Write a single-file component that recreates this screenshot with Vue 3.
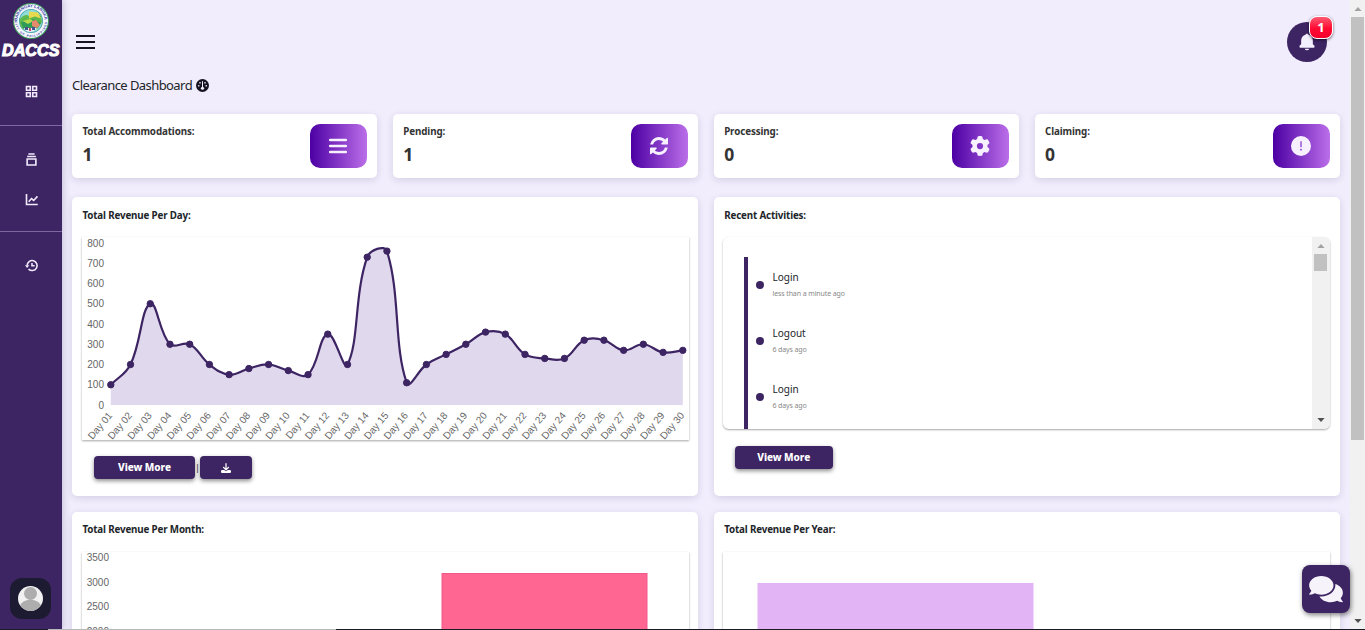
<script setup>
const stats = [
  { label: 'Total Accommodations:', value: 1, icon: 'bars' },
  { label: 'Pending:', value: 1, icon: 'refresh' },
  { label: 'Processing:', value: 0, icon: 'gear' },
  { label: 'Claiming:', value: 0, icon: 'alert' },
]

const activities = [
  { title: 'Login', time: 'less than a minute ago' },
  { title: 'Logout', time: '6 days ago' },
  { title: 'Login', time: '6 days ago' },
]

const revenue = [
  100, 200, 500, 300, 300, 200, 150, 180, 200, 170, 150, 350, 200, 730, 760,
  110, 200, 250, 300, 360, 350, 250, 230, 230, 320, 320, 270, 300, 260, 270,
]

// Plot area inside the daily chart's drawing surface
const plot = { left: 28.8, right: 600.8, top: 6, bottom: 168 }
const yOf = (v) => plot.bottom - (v / 800) * (plot.bottom - plot.top)
const points = revenue.map((v, i) => ({
  x: plot.left + (i * (plot.right - plot.left)) / (revenue.length - 1),
  y: yOf(v),
  label: 'Day ' + String(i + 1).padStart(2, '0'),
}))
const yTicks = [800, 700, 600, 500, 400, 300, 200, 100, 0]

// Smooth curve: each point's handles follow the chord between its neighbours
const tension = 0.4
const clampY = (y) => Math.min(plot.bottom, Math.max(plot.top, y))
const handles = points.map((p, i) => {
  const a = points[i - 1] || p
  const b = points[i + 1] || p
  const d0 = Math.hypot(p.x - a.x, p.y - a.y)
  const d1 = Math.hypot(b.x - p.x, b.y - p.y)
  const f0 = (tension * d0) / (d0 + d1)
  const f1 = (tension * d1) / (d0 + d1)
  return {
    inX: p.x - f0 * (b.x - a.x),
    inY: clampY(p.y - f0 * (b.y - a.y)),
    outX: p.x + f1 * (b.x - a.x),
    outY: clampY(p.y + f1 * (b.y - a.y)),
  }
})
const line = points.reduce((d, p, i) => {
  if (i === 0) return `M${p.x} ${p.y}`
  const o = handles[i - 1]
  const n = handles[i]
  return `${d}C${o.outX} ${o.outY} ${n.inX} ${n.inY} ${p.x} ${p.y}`
}, '')
const area = `${line}L${plot.right} ${plot.bottom}L${plot.left} ${plot.bottom}Z`
</script>

<template>
  <div class="app">
    <aside class="sidebar">
      <svg class="seal" viewBox="0 0 38 38" width="38" height="38">
        <defs>
          <path id="ring-top" d="M5.2 19a13.8 13.8 0 0 1 27.6 0" />
          <path id="ring-bottom" d="M2.9 19a16.1 16.1 0 0 0 32.2 0" />
        </defs>
        <circle cx="19" cy="19" r="18" fill="#3d9a5c" />
        <circle cx="19" cy="19" r="17" fill="#f4f6ff" />
        <text class="seal-text"><textPath href="#ring-top" textLength="42">BARANGAY LANGKA</textPath></text>
        <text class="seal-text small"><textPath href="#ring-bottom" textLength="49">CITY OF PHILIPPINES</textPath></text>
        <circle cx="19" cy="19" r="12" fill="#3f9d9c" />
        <circle cx="19" cy="19" r="11.2" fill="#8fdcd8" />
        <path d="M8 17q5-6 9-3t7-4l5 4 1 6-5 7H11q-4-4-3-10z" fill="#5fb84b" />
        <path d="M17 9.500l9 1 3 6-6-2-6 2z" fill="#e9d94f" />
        <path d="M9 20h8l4-3 8 4-3 5H11z" fill="#2f9c58" />
        <path d="M11 19l7-2 3 2-5 3z" fill="#b9d94a" />
        <path d="M20 19l4-1 4 5-3 3-5-2z" fill="#e58a6a" />
        <path d="M12 26h13l-3 3-4 1-4-1z" fill="#e7eef8" />
        <path d="M13 25h3v3h-3zM20 25h3v3h-3z" fill="#45538f" />
        <path d="M17 26h2v3h-2z" fill="#c94a66" />
      </svg>
      <svg class="brand" viewBox="0 0 62 20" width="62" height="20">
        <text x="2" y="16.300" textLength="57.500" lengthAdjust="spacingAndGlyphs">DACCS</text>
      </svg>
      <nav class="nav">
        <a class="nav-item first">
          <svg viewBox="0 0 24 24"><path d="M4 4h6v6H4zM14 4h6v6h-6zM4 14h6v6H4zM14 14h6v6h-6z" class="st" /></svg>
        </a>
        <hr />
        <a class="nav-item second">
          <svg viewBox="0 0 24 24"><path d="M5 11.200h14v9.600H5z" class="st" /><path d="M5 6h14v2.300H5zm2-4h10v2.300H7z" /></svg>
        </a>
        <a class="nav-item">
          <svg viewBox="0 0 24 24"><path d="M4 3v17h18M7.500 15.500l4.500-5 3.500 3L21.500 7" class="st" /></svg>
        </a>
        <hr />
        <a class="nav-item second">
          <svg viewBox="0 0 24 24"><path d="M5 12a8 8 0 1 1 2.300 5.700" class="st" /><path d="M11.500 8v5.500H17v-2.300h-3V8zM1.500 11.500h7L5 16z" /></svg>
        </a>
      </nav>
      <div class="avatar">
        <svg viewBox="0 0 25 25" width="25" height="25">
          <clipPath id="face"><circle cx="12.500" cy="12.500" r="12.500" /></clipPath>
          <g clip-path="url(#face)">
            <rect width="25" height="25" fill="#f1f1f1" />
            <circle cx="12.500" cy="7.500" r="6.500" fill="#adadad" />
            <ellipse cx="12.500" cy="20.500" rx="10.500" ry="6.700" fill="#adadad" />
          </g>
        </svg>
      </div>
    </aside>

    <main class="main">
      <header class="topbar">
        <svg class="menu" viewBox="0 0 19 14" width="19" height="14">
          <path d="M0 1h19M0 7h19M0 13h19" stroke="#16121f" stroke-width="2" />
        </svg>
        <div class="bell">
          <svg viewBox="0 0 24 24" width="20" height="20" fill="#f4f1ff"><path d="M12 22a2.980 2.980 0 0 0 2.818-2H9.182A2.980 2.980 0 0 0 12 22zm7-7.414V10c0-3.217-2.185-5.927-5.145-6.742C13.562 2.520 12.846 2 12 2s-1.562.520-1.855 1.258C7.184 4.073 5 6.783 5 10v4.586l-1.707 1.707A.996.996 0 0 0 3 17v1a1 1 0 0 0 1 1h16a1 1 0 0 0 1-1v-1a.996.996 0 0 0-.293-.707L19 14.586z" /></svg>
          <span class="badge">1</span>
        </div>
      </header>

      <h1 class="page-title">
        <span>Clearance Dashboard</span>
        <svg viewBox="0 0 26 26" width="13" height="13">
          <circle cx="13" cy="13" r="13" fill="#16121f" />
          <g fill="#f1edfc">
            <circle cx="8" cy="7.500" r="1.700" /><circle cx="18" cy="7.500" r="1.700" />
            <circle cx="5.500" cy="13.500" r="1.700" /><circle cx="20.500" cy="13.500" r="1.700" />
            <circle cx="13" cy="18.500" r="3.200" /><path d="M12 4.500h2V18h-2z" />
          </g>
        </svg>
      </h1>

      <section class="stats">
        <article v-for="s in stats" :key="s.label" class="card stat">
          <div class="stat-text">
            <span class="stat-label">{{ s.label }}</span>
            <strong class="stat-value">{{ s.value }}</strong>
          </div>
          <div class="stat-icon">
            <svg v-if="s.icon === 'bars'" viewBox="0 0 18 16" width="18" height="16"><path d="M1 2h16M1 8h16M1 14h16" stroke="#f6f0ff" stroke-width="2.400" stroke-linecap="round" /></svg>
            <svg v-else-if="s.icon === 'refresh'" viewBox="0 0 1536 1536" width="18" height="18" fill="#f6f0ff"><path d="M1511 928q0 5-1 7-64 268-268 434.500t-478 166.500q-146 0-282.500-55t-243.500-157l-129 129q-19 19-45 19t-45-19-19-45v-448q0-26 19-45t45-19h448q26 0 45 19t19 45-19 45l-137 137q71 66 161 102t187 36q134 0 250-65t186-179q11-17 53-117 8-23 30-23h192q13 0 22.500 9.500t9.500 22.500zm25-800v448q0 26-19 45t-45 19h-448q-26 0-45-19t-19-45 19-45l138-138q-148-137-349-137-134 0-250 65t-186 179q-11 17-53 117-8 23-30 23h-199q-13 0-22.500-9.500t-9.500-22.500v-7q65-268 270-434.500t480-166.500q146 0 284 55.500t245 156.500l130-129q19-19 45-19t45 19 19 45z" /></svg>
            <svg v-else-if="s.icon === 'gear'" viewBox="0 0 512 512" width="20" height="20" fill="#f6f0ff"><path d="M495.900 166.600c3.200 8.700 .5 18.400-6.400 24.600l-43.300 39.400c1.100 8.300 1.700 16.800 1.700 25.400s-.6 17.100-1.700 25.400l43.300 39.400c6.900 6.200 9.600 15.900 6.400 24.600c-4.400 11.900-9.700 23.300-15.800 34.300l-4.700 8.100c-6.600 11-14 21.400-22.100 31.200c-5.900 7.200-15.700 9.600-24.500 6.800l-55.700-17.700c-13.400 10.300-28.200 18.900-44 25.400l-12.500 57.100c-2 9.100-9 16.300-18.200 17.800c-13.800 2.300-28 3.500-42.500 3.500s-28.700-1.200-42.500-3.500c-9.200-1.500-16.200-8.700-18.200-17.800l-12.500-57.100c-15.800-6.500-30.600-15.100-44-25.400L83.100 425.900c-8.800 2.800-18.600 .3-24.500-6.800c-8.100-9.800-15.500-20.200-22.100-31.200l-4.700-8.100c-6.100-11-11.400-22.400-15.800-34.300c-3.200-8.700-.5-18.400 6.400-24.600l43.300-39.400C64.600 273.100 64 264.600 64 256s.6-17.100 1.700-25.400L22.400 191.200c-6.900-6.200-9.600-15.900-6.400-24.600c4.400-11.900 9.700-23.300 15.800-34.300l4.700-8.100c6.600-11 14-21.400 22.100-31.200c5.900-7.200 15.700-9.600 24.500-6.800l55.700 17.700c13.400-10.300 28.200-18.900 44-25.400l12.500-57.100c2-9.100 9-16.300 18.200-17.800C227.300 1.200 241.500 0 256 0s28.700 1.200 42.500 3.500c9.200 1.500 16.200 8.700 18.200 17.800l12.500 57.100c15.800 6.500 30.600 15.100 44 25.400l55.700-17.700c8.800-2.800 18.600-.3 24.500 6.800c8.100 9.800 15.500 20.200 22.100 31.200l4.700 8.100c6.100 11 11.400 22.400 15.800 34.300zM256 336a80 80 0 1 0 0-160 80 80 0 1 0 0 160z" /></svg>
            <svg v-else viewBox="0 0 20 20" width="20" height="20"><circle cx="10" cy="10" r="10" fill="#f6f0ff" /><path d="M10 5.200v6" stroke="#8a3fd0" stroke-width="1.300" /><circle cx="10" cy="13.700" r=".9" fill="#8a3fd0" /></svg>
          </div>
        </article>
      </section>

      <section class="panels">
        <article class="card panel">
          <h2>Total Revenue Per Day:</h2>
          <div class="chart daily">
            <svg class="drawing" viewBox="0 0 607 203" width="607" height="203">
              <text v-for="t in yTicks" :key="t" class="tick" x="22" :y="yOf(t) + 3.500" text-anchor="end">{{ t }}</text>
              <path :d="area" fill="#e0d8ed" />
              <path :d="line" fill="none" stroke="#3d2463" stroke-width="2.200" />
              <circle v-for="p in points" :key="p.label" :cx="p.x" :cy="p.y" r="3.200" fill="#3d2463" stroke="#3d2463" />
              <g v-for="p in points" :key="'t' + p.label" :transform="`translate(${p.x + 0.5} 177.5) rotate(-50)`">
                <text class="tick" text-anchor="end" y="2">{{ p.label }}</text>
              </g>
            </svg>
          </div>
          <div class="actions">
            <button class="btn wide">View More</button>
            <span class="bar">|</span>
            <button class="btn dl">
              <svg viewBox="0 0 512 512" width="10" height="10" fill="#fff"><path d="M288 32c0-17.700-14.300-32-32-32s-32 14.300-32 32V274.700l-73.400-73.400c-12.500-12.500-32.800-12.500-45.300 0s-12.500 32.800 0 45.300l128 128c12.500 12.500 32.800 12.500 45.300 0l128-128c12.500-12.500 12.500-32.800 0-45.300s-32.800-12.500-45.300 0L288 274.700V32zM64 352c-35.300 0-64 28.700-64 64v32c0 35.300 28.700 64 64 64H448c35.300 0 64-28.700 64-64V416c0-35.300-28.700-64-64-64H346.500l-45.300 45.300c-25 25-65.500 25-90.500 0L165.500 352H64z" /></svg>
            </button>
          </div>
        </article>

        <article class="card panel">
          <h2>Recent Activities:</h2>
          <div class="chart feed">
            <ul class="timeline">
              <li v-for="(a, i) in activities" :key="i">
                <i class="dot"></i>
                <div>
                  <p>{{ a.title }}</p>
                  <small>{{ a.time }}</small>
                </div>
              </li>
            </ul>
            <div class="scroll inner">
              <svg viewBox="0 0 9 5" width="8" height="4"><path d="M0 5l4.500-5L9 5z" fill="#a3a3a3" /></svg>
              <div class="thumb"></div>
              <svg viewBox="0 0 9 5" width="8" height="4"><path d="M0 0l4.500 5L9 0z" fill="#505050" /></svg>
            </div>
          </div>
          <div class="actions right">
            <button class="btn">View More</button>
          </div>
        </article>

        <article class="card panel low">
          <h2>Total Revenue Per Month:</h2>
          <div class="chart tall">
            <svg class="drawing" viewBox="0 0 607 203" width="607" height="203">
              <text class="tick" x="27" y="9" text-anchor="end">3500</text>
              <text class="tick" x="27" y="33.700" text-anchor="end">3000</text>
              <text class="tick" x="27" y="58" text-anchor="end">2500</text>
              <text class="tick" x="27" y="82.500" text-anchor="end">2000</text>
              <rect x="360" y="21.500" width="205" height="160" fill="#ff6691" stroke="#f2588a" />
            </svg>
          </div>
        </article>

        <article class="card panel low">
          <h2>Total Revenue Per Year:</h2>
          <div class="chart tall">
            <svg class="drawing" viewBox="0 0 607 203" width="607" height="203">
              <rect x="34.500" y="31" width="276" height="160" fill="#e3b4f5" />
            </svg>
          </div>
        </article>
      </section>
    </main>

    <div class="scroll page">
      <svg viewBox="0 0 9 5" width="8" height="4"><path d="M0 5l4.500-5L9 5z" fill="#a3a3a3" /></svg>
      <div class="thumb"></div>
      <svg viewBox="0 0 9 5" width="8" height="4"><path d="M0 0l4.500 5L9 0z" fill="#505050" /></svg>
    </div>

    <button class="chat">
      <svg viewBox="0 0 576 512" width="34" height="30" fill="#f6f3fb"><path d="M416 192c0-88.400-93.100-160-208-160S0 103.600 0 192c0 34.300 14.100 65.900 38 92-13.400 30.200-35.500 54.200-35.800 54.500-2.200 2.300-2.800 5.700-1.500 8.700S4.800 352 8 352c36.600 0 66.900-12.300 88.700-25 32.200 15.700 70.300 25 111.300 25 114.900 0 208-71.600 208-160zm122 220c23.900-26 38-57.700 38-92 0-66.900-53.500-124.200-129.300-148.100.9 6.600 1.300 13.300 1.300 20.100 0 105.900-107.700 192-240 192-10.800 0-21.300-.8-31.700-1.900C207.800 439.600 281.800 480 368 480c41 0 79.100-9.200 111.300-25 21.800 12.700 52.100 25 88.700 25 3.200 0 6.100-1.900 7.300-4.800 1.300-2.900.7-6.300-1.500-8.700-.3-.3-22.400-24.200-35.800-54.500z" /></svg>
    </button>
    <div class="edge"></div>
  </div>
</template>

<style>
body {
  margin: 0;
  overflow: hidden;
}
</style>

<style scoped>
* {
  box-sizing: border-box;
}
.app {
  position: relative;
  display: flex;
  width: 1365px;
  height: 630px;
  overflow: hidden;
  background: #f1edfc;
  color: #212529;
  font-family: "Noto Sans", "Open Sans", sans-serif;
}
svg {
  display: block;
  flex: none;
}

/* Sidebar */
.sidebar {
  position: relative;
  z-index: 2;
  display: flex;
  flex-direction: column;
  flex: none;
  width: 62px;
  height: 630px;
  background: #3d2463;
  box-shadow: 1px 0 7px rgba(61, 36, 99, 0.25);
}
.seal {
  margin: 2px 0 0 12px;
}
.seal-text {
  font: bold 4.2px "Liberation Sans", sans-serif;
  fill: #3a3f9d;
}
.seal-text.small {
  font-size: 3px;
}
.brand {
  overflow: visible;
}
.brand text {
  font: italic 900 16.5px "Liberation Sans", sans-serif;
  fill: #fff;
  stroke: #fff;
  stroke-width: 1.1;
}
.nav {
  display: flex;
  flex-direction: column;
}
.nav-item {
  display: flex;
  align-items: center;
  justify-content: center;
  height: 40px;
  padding-left: 1px;
}
.nav-item svg {
  width: 15px;
  height: 15px;
  fill: #f1eafc;
}
.nav-item .st {
  fill: none;
  stroke: #f1eafc;
  stroke-width: 2.6;
}
.nav-item.first {
  margin: 11px 0 14px;
}
.nav-item.second {
  margin-top: 13px;
}
.nav hr {
  width: 100%;
  height: 1px;
  margin: 0;
  border: 0;
  background: #7d68a0;
}
.nav-item:nth-of-type(3) {
  margin-bottom: 12px;
}
.avatar {
  display: flex;
  align-items: center;
  justify-content: center;
  width: 41px;
  height: 41px;
  margin: auto 0 11px 10px;
  border-radius: 12px;
  background: #1d1b31;
}

/* Main column */
.main {
  flex: none;
  width: 1288px;
  padding: 22px 10.5px 0 10px;
}
.topbar {
  display: flex;
  align-items: center;
  justify-content: space-between;
  height: 40px;
  padding: 0 12.5px 0 5px;
}
.menu {
  margin-left: -1px;
}
.bell {
  position: relative;
  display: flex;
  align-items: center;
  justify-content: center;
  width: 40px;
  height: 40px;
  padding-right: 1px;
  border-radius: 50%;
  background: #3d2463;
}
.badge {
  position: absolute;
  top: -6px;
  left: 22px;
  width: 24px;
  height: 23px;
  border: 1.5px solid #fff;
  border-radius: 8px;
  background: linear-gradient(#ff5a72, #ff0a32 55%, #f5002c);
  box-shadow: 0 1px 3px rgba(0, 0, 0, 0.6);
  color: #fff;
  font-size: 13px;
  font-weight: 700;
  line-height: 20px;
  text-align: center;
}
.page-title {
  display: flex;
  align-items: center;
  gap: 4px;
  height: 46px;
  margin: 0 0 6px;
  font-size: 13px;
  font-weight: 400;
  letter-spacing: -0.57px;
}
.card {
  border-radius: 5px;
  background: #fff;
  box-shadow: 0 2px 7px rgba(61, 36, 99, 0.15);
}

/* Summary cards */
.stats {
  display: grid;
  grid-template-columns: repeat(4, 1fr);
  gap: 16px;
}
.stat {
  display: flex;
  justify-content: space-between;
  height: 64px;
  padding: 10px;
}
.stat-text {
  display: flex;
  flex-direction: column;
  padding-left: 0.4px;
}
.stat-label {
  height: 16px;
  color: #333;
  font-size: 9.8px;
  font-weight: 700;
  line-height: 15px;
  letter-spacing: -0.11px;
}
.stat-value {
  color: #333;
  font-size: 17.5px;
  font-weight: 700;
  line-height: 30px;
}
.stat-icon {
  display: flex;
  align-items: center;
  justify-content: center;
  width: 57px;
  height: 44px;
  border-radius: 10px;
  background: linear-gradient(to right, #4c00a4, #bb6ee8);
}

/* Chart panels */
.panels {
  display: grid;
  grid-template-columns: 1fr 1fr;
  gap: 16px;
  margin-top: 19px;
}
.panel {
  height: 299px;
  padding: 0 9px 0 9.5px;
}
.panel h2 {
  height: 40px;
  margin: 0 0 0 1px;
  font-size: 9.8px;
  font-weight: 700;
  line-height: 37px;
  letter-spacing: -0.16px;
}
.panel.low h2 {
  line-height: 35px;
}
.chart {
  width: 607px;
  height: 203px;
  background: #fff;
  box-shadow: 0 1px 2px rgba(0, 0, 0, 0.35);
}
.tick {
  font: 10px "Liberation Sans", Arial, sans-serif;
  fill: #666;
}
.drawing {
  overflow: visible;
}
.actions {
  display: flex;
  align-items: center;
  margin: 16px 0 0 12.5px;
}
.actions.right {
  margin: 17px 0 0 11.5px;
}
.btn {
  display: flex;
  align-items: center;
  justify-content: center;
  width: 98px;
  height: 23px;
  padding: 0;
  border: 0;
  border-radius: 4px;
  background: #3d2463;
  box-shadow: 0 2px 4px rgba(0, 0, 0, 0.45);
  color: #fff;
  font: 800 10px/21px "Noto Sans", sans-serif;
  letter-spacing: -0.05px;
}
.btn.wide {
  width: 101px;
}
.btn.dl {
  width: 52px;
}
.bar {
  width: 5px;
  font-size: 9px;
  line-height: 12px;
  text-align: center;
}

/* Activity feed */
.feed {
  display: flex;
  justify-content: space-between;
  height: 192px;
  padding-left: 20.5px;
  border-radius: 6px;
  overflow: hidden;
}
.timeline {
  height: 172px;
  margin: 20px 0 0;
  padding: 0 0 0 8px;
  border-left: 4px solid #3d2463;
  list-style: none;
}
.timeline li {
  display: flex;
  align-items: center;
  gap: 8.7px;
  height: 56px;
}
.timeline p {
  margin: 0;
  font-size: 10px;
  line-height: 17px;
}
.timeline small {
  display: block;
  color: #888;
  font-size: 7px;
  line-height: 15px;
  letter-spacing: -0.1px;
}
.dot {
  width: 8px;
  height: 8px;
  border-radius: 50%;
  background: #3d2463;
}

/* Scrollbars */
.scroll {
  display: flex;
  flex-direction: column;
  align-items: center;
  background: #f1f1f1;
}
.scroll svg:last-child {
  margin-top: auto;
}
.scroll .thumb {
  background: #c1c1c1;
}
.inner {
  width: 18px;
  padding: 7px 1px 7px 0;
}
.inner .thumb {
  width: 13px;
  height: 17px;
  margin-top: 6px;
}
.page {
  flex: none;
  width: 15px;
  padding: 7px 0 7px;
}
.page .thumb {
  width: 13px;
  height: 423px;
  margin-top: 6px;
}

/* Floating chat launcher and bottom window edge */
.chat {
  position: absolute;
  z-index: 3;
  left: 1302px;
  top: 565px;
  display: flex;
  align-items: center;
  justify-content: center;
  width: 48px;
  height: 48px;
  padding: 0;
  border: 0;
  border-radius: 8px;
  background: #3d2463;
  box-shadow: 1px 2px 5px rgba(0, 0, 0, 0.5);
}
.edge {
  position: absolute;
  z-index: 4;
  left: 0;
  bottom: 0;
  width: 1365px;
  height: 1px;
  background: linear-gradient(to right, #1c1a22 48px, #b9b9bb 48px, #b9b9bb 336px, #1c1a22 336px);
}
</style>
